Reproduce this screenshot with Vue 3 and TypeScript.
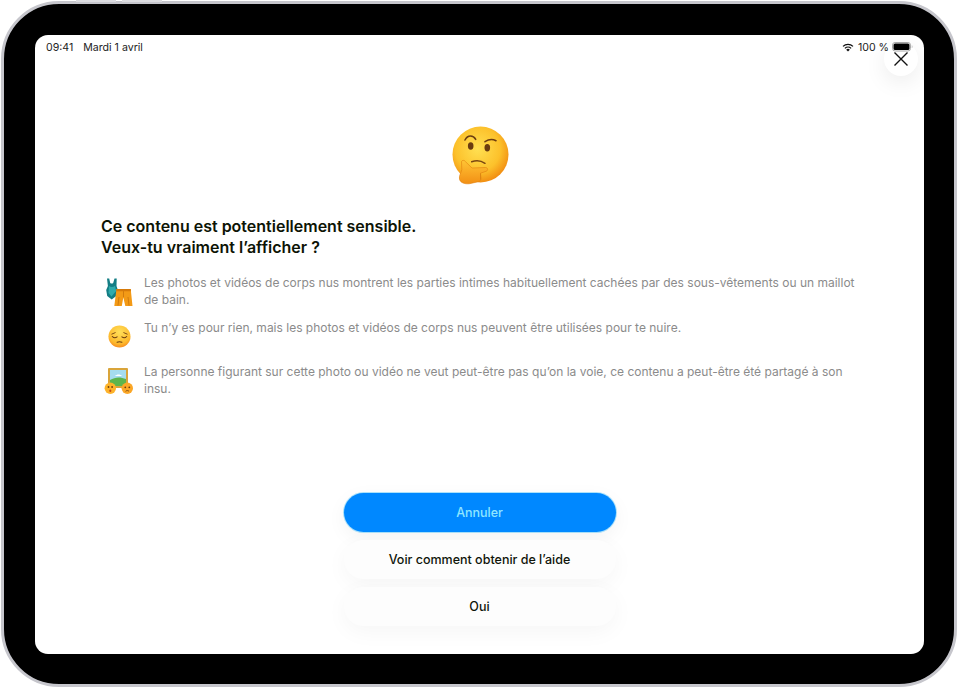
<script setup lang="ts">
const rows = [
  { id: 'a', text: 'Les photos et vidéos de corps nus montrent les parties intimes habituellement cachées par des sous-vêtements ou un maillot de bain.' },
  { id: 'b', text: 'Tu n’y es pour rien, mais les photos et vidéos de corps nus peuvent être utilisées pour te nuire.' },
  { id: 'c', text: 'La personne figurant sur cette photo ou vidéo ne veut peut-être pas qu’on la voie, ce contenu a peut-être été partagé à son insu.' },
]
</script>

<template>
  <div class="page">
    <div class="device">
      <i class="edge edge-a"></i><i class="edge edge-b"></i>
      <div class="bezel">
        <div class="screen">
          <div class="status">
            <span class="time">09:41</span>
            <span class="date">Mardi 1 avril</span>
            <span class="spacer"></span>
            <svg class="wifi" width="12" height="9" viewBox="0 0 12 9">
              <path d="M6 8.6 4.2 6.7a2.6 2.6 0 0 1 3.6 0z" fill="#111" />
              <path d="M2.9 5.4a4.5 4.5 0 0 1 6.2 0" fill="none" stroke="#111" stroke-width="1.3" />
              <path d="M1 3.4a7.2 7.2 0 0 1 10 0" fill="none" stroke="#111" stroke-width="1.3" />
            </svg>
            <span class="pct">100 %</span>
            <svg class="battery" width="21" height="10" viewBox="0 0 21 10">
              <rect x=".5" y=".5" width="18" height="8.5" rx="2.6" fill="none" stroke="#a8a8a8" />
              <rect x="1.5" y="1.5" width="16" height="6.5" rx="1.6" fill="#000" />
              <path d="M19.8 3.2c.8.3.8 2.8 0 3.1z" fill="#999" />
            </svg>
          </div>

          <button class="close" aria-label="Fermer">
            <svg width="16" height="16" viewBox="0 0 16 16">
              <path d="M1.5 1.5l13 13M14.5 1.5l-13 13" stroke="#111" stroke-width="1.4" fill="none" />
            </svg>
          </button>

          <div class="hero">
            <svg width="62" height="62" viewBox="0 0 62 62">
              <defs>
                <radialGradient id="face" cx=".45" cy=".4" r=".62">
                  <stop offset="0" stop-color="#ffe052" />
                  <stop offset=".65" stop-color="#fcc12b" />
                  <stop offset="1" stop-color="#f18a10" />
                </radialGradient>
                <linearGradient id="hand" x1="0" y1="0" x2="0" y2="1">
                  <stop offset="0" stop-color="#ffc435" />
                  <stop offset="1" stop-color="#f28f14" />
                </linearGradient>
              </defs>
              <circle cx="31.500" cy="28.500" r="28" fill="url(#face)" />
              <path d="M16 14c1.500-3 3.500-4 5.500-4 2 0 4 1.200 5.200 3.300" fill="none" stroke="#6d3d10" stroke-width="1.600" stroke-linecap="round" />
              <path d="M36 15.700c3-2 7-3 11-1" fill="none" stroke="#6d3d10" stroke-width="1.600" stroke-linecap="round" />
              <ellipse cx="21.700" cy="20" rx="2.800" ry="3.700" fill="#6a3c10" />
              <ellipse cx="38.300" cy="21.700" rx="2.800" ry="3.700" fill="#6a3c10" />
              <path d="M22.700 35.700c4.500-1.500 9.500-1 13.300 1.600" fill="none" stroke="#7a4712" stroke-width="1.500" stroke-linecap="round" />
              <path d="M12.500 35.500c.5-1.500 3-1.500 3.800 0l6.700 6.500 13.500-.5c2.500 0 2.800 3 .8 3.700l-5.800 2 .5 5c0 2-1 3-2.500 3.500l-9 2c-4 .5-9-.5-10-4.500-.7-3.500 1.500-6 2.300-9.500z" fill="url(#hand)" stroke="#e07f0e" stroke-width=".6" />
              <path d="M31.500 47.500v6" stroke="#d67f10" stroke-width=".7" />
            </svg>
          </div>

          <div class="content">
            <h1 class="title">Ce contenu est potentiellement sensible.<br />Veux-tu vraiment l’afficher ?</h1>
            <ul class="list">
              <li v-for="r in rows" :key="r.id" class="row" :class="'row-' + r.id">
                <span class="emoji">
                  <svg v-if="r.id === 'a'" width="30" height="32" viewBox="0 0 30 32">
                    <path d="M3 3.500h2.200l1 4.500c1 .8 2 .8 3 0l1.300-4.500h2.200l-.2 7.500 1.700 5v3.500l-6.500 5-4.500-3.500-1-6 1.700-4z" fill="#137d84" />
                    <path d="M5 11c1.800 1.200 4 1.200 6 0l1.200 5-4.700 5.500L4.500 18z" fill="#2fabab" />
                    <path d="M12.500 14h14.200l1.800 17h-7.200l-2-8.500-1.500 8.500h-7.500z" fill="#f39a16" />
                    <path d="M12.500 14h14.200l.2 2.200H12.300z" fill="#d67a0a" />
                    <path d="M19.500 16.200v6M15 22l-1 8.500M24 22l1 8.500" stroke="#c46f08" stroke-width=".7" />
                  </svg>
                  <svg v-else-if="r.id === 'b'" width="23" height="23" viewBox="0 0 24 24">
                    <defs>
                      <radialGradient id="pens" cx=".5" cy=".3" r=".75">
                        <stop offset="0" stop-color="#ffe05a" />
                        <stop offset=".7" stop-color="#fdb92c" />
                        <stop offset="1" stop-color="#f5811c" />
                      </radialGradient>
                    </defs>
                    <circle cx="12" cy="12" r="11.500" fill="url(#pens)" />
                    <path d="M4 9.500l3.500-1.500M20 9.500 16.500 8" stroke="#7a4712" stroke-width="1" stroke-linecap="round" />
                    <path d="M4.500 12c1.500 1.600 3.500 1.600 5 .4M14.500 12.400c1.500 1.200 3.500 1.200 5-.4" fill="none" stroke="#6a3c10" stroke-width="1.100" stroke-linecap="round" />
                    <path d="M9.500 18c1.700-.8 3.300-.8 5 0" fill="none" stroke="#6a3c10" stroke-width="1.100" stroke-linecap="round" />
                  </svg>
                  <svg v-else width="30" height="30" viewBox="0 0 30 30">
                    <rect x="4" y="3" width="20" height="20" rx="1" fill="#d9a43a" />
                    <rect x="6" y="5" width="16" height="16" fill="#a5dcef" />
                    <path d="M6 15c5-3 10-3.500 16-1v7H6z" fill="#5cb54c" />
                    <path d="M11 11c2-2 5-2 7 0z" fill="#fff" />
                    <circle cx="6.300" cy="23.300" r="5.700" fill="#fdb32a" />
                    <circle cx="23.300" cy="23.300" r="5.700" fill="#fba727" />
                    <circle cx="4.500" cy="22" r=".9" fill="#6a3c10" /><circle cx="8.100" cy="22" r=".9" fill="#6a3c10" />
                    <rect x="5.300" y="24.500" width="2" height="2.500" rx="1" fill="#c44a1a" />
                    <circle cx="21.300" cy="22.300" r=".9" fill="#6a3c10" /><circle cx="25.300" cy="22.300" r=".9" fill="#6a3c10" />
                    <path d="M21.600 26.300c1-1 2.400-1 3.400 0" fill="none" stroke="#6a3c10" stroke-width=".8" />
                  </svg>
                </span>
                <p class="text">{{ r.text }}</p>
              </li>
            </ul>
          </div>

          <div class="actions">
            <button class="btn primary">Annuler</button>
            <button class="btn">Voir comment obtenir de l’aide</button>
            <button class="btn">Oui</button>
          </div>
        </div>
      </div>
    </div>
  </div>
</template>

<style>
html, body { margin: 0; background: #fff; }
</style>

<style scoped>
.page {
  width: 960px;
  height: 689px;
  padding: 1px 3px 2px 1px;
  box-sizing: border-box;
  font-family: Inter, "Liberation Sans", sans-serif;
  background: #fff;
  overflow: hidden;
}
.device {
  position: relative;
  height: 100%;
  box-sizing: border-box;
  border: 3px solid #c6c6cc;
  border-radius: 58px;
  background: #000;
}
.edge {
  position: absolute;
  top: -4px;
  height: 2px;
  background: #dcdce0;
}
.edge-a { left: 72px; width: 40px; }
.edge-b { left: 118px; width: 40px; }
.bezel {
  height: 100%;
  box-sizing: border-box;
  padding: 31px 30px 30px 31px;
}
.screen {
  position: relative;
  height: 100%;
  background: #fff;
  border-radius: 13px;
  overflow: hidden;
  display: flex;
  flex-direction: column;
}
.status {
  display: flex;
  align-items: center;
  height: 24px;
  padding: 0 11px;
  font-size: 10.600px;
  color: #222;
  flex: none;
}
.date { margin-left: 10px; }
.spacer { flex: 1; }
.pct { margin-left: 4px; margin-right: 3px; position: relative; z-index: 2; }
.wifi, .battery { position: relative; z-index: 2; }
.close {
  position: absolute;
  top: 7px;
  right: 6px;
  width: 34px;
  height: 34px;
  border: 0;
  padding: 0;
  border-radius: 50%;
  background: #fff;
  box-shadow: 0 6px 22px rgba(0, 0, 0, .08);
  display: flex;
  align-items: center;
  justify-content: center;
}
.hero {
  display: flex;
  justify-content: center;
  margin-top: 67px;
  flex: none;
}
.content {
  padding: 0 66px;
  margin-top: 28px;
  flex: none;
}
.title {
  margin: 0;
  font-size: 16px;
  line-height: 21px;
  font-weight: 600;
  color: #0d1405;
}
.list {
  list-style: none;
  margin: 17px 0 0;
  padding: 0;
  display: flex;
  flex-direction: column;
}
.row {
  display: flex;
  align-items: flex-start;
  gap: 9px;
}
.row-b { margin-top: 12px; min-height: 40px; }
.row-c { margin-top: 4px; }
.emoji {
  width: 34px;
  height: 32px;
  padding-left: 2px;
  box-sizing: border-box;
  flex: none;
  display: flex;
  align-items: center;
  justify-content: center;
}
.text {
  margin: 0;
  font-size: 12px;
  line-height: 16.500px;
  color: #8b8b8b;
}
.actions {
  margin-top: auto;
  margin-bottom: 28px;
  align-self: center;
  display: flex;
  flex-direction: column;
  gap: 8px;
  width: 272px;
}
.btn {
  height: 39px;
  border: 0;
  border-radius: 20px;
  background: #fdfdfd;
  font-family: inherit;
  font-size: 12.500px;
  font-weight: 500;
  color: #10150a;
  box-shadow: 0 6px 22px rgba(0, 0, 0, .04);
}
.primary {
  background: #0088ff;
  color: #8fe6ff;
  font-weight: 500;
  box-shadow: 0 0 0 1px rgba(90, 200, 250, .5), 0 6px 20px rgba(0, 0, 0, .05);
}
</style>
